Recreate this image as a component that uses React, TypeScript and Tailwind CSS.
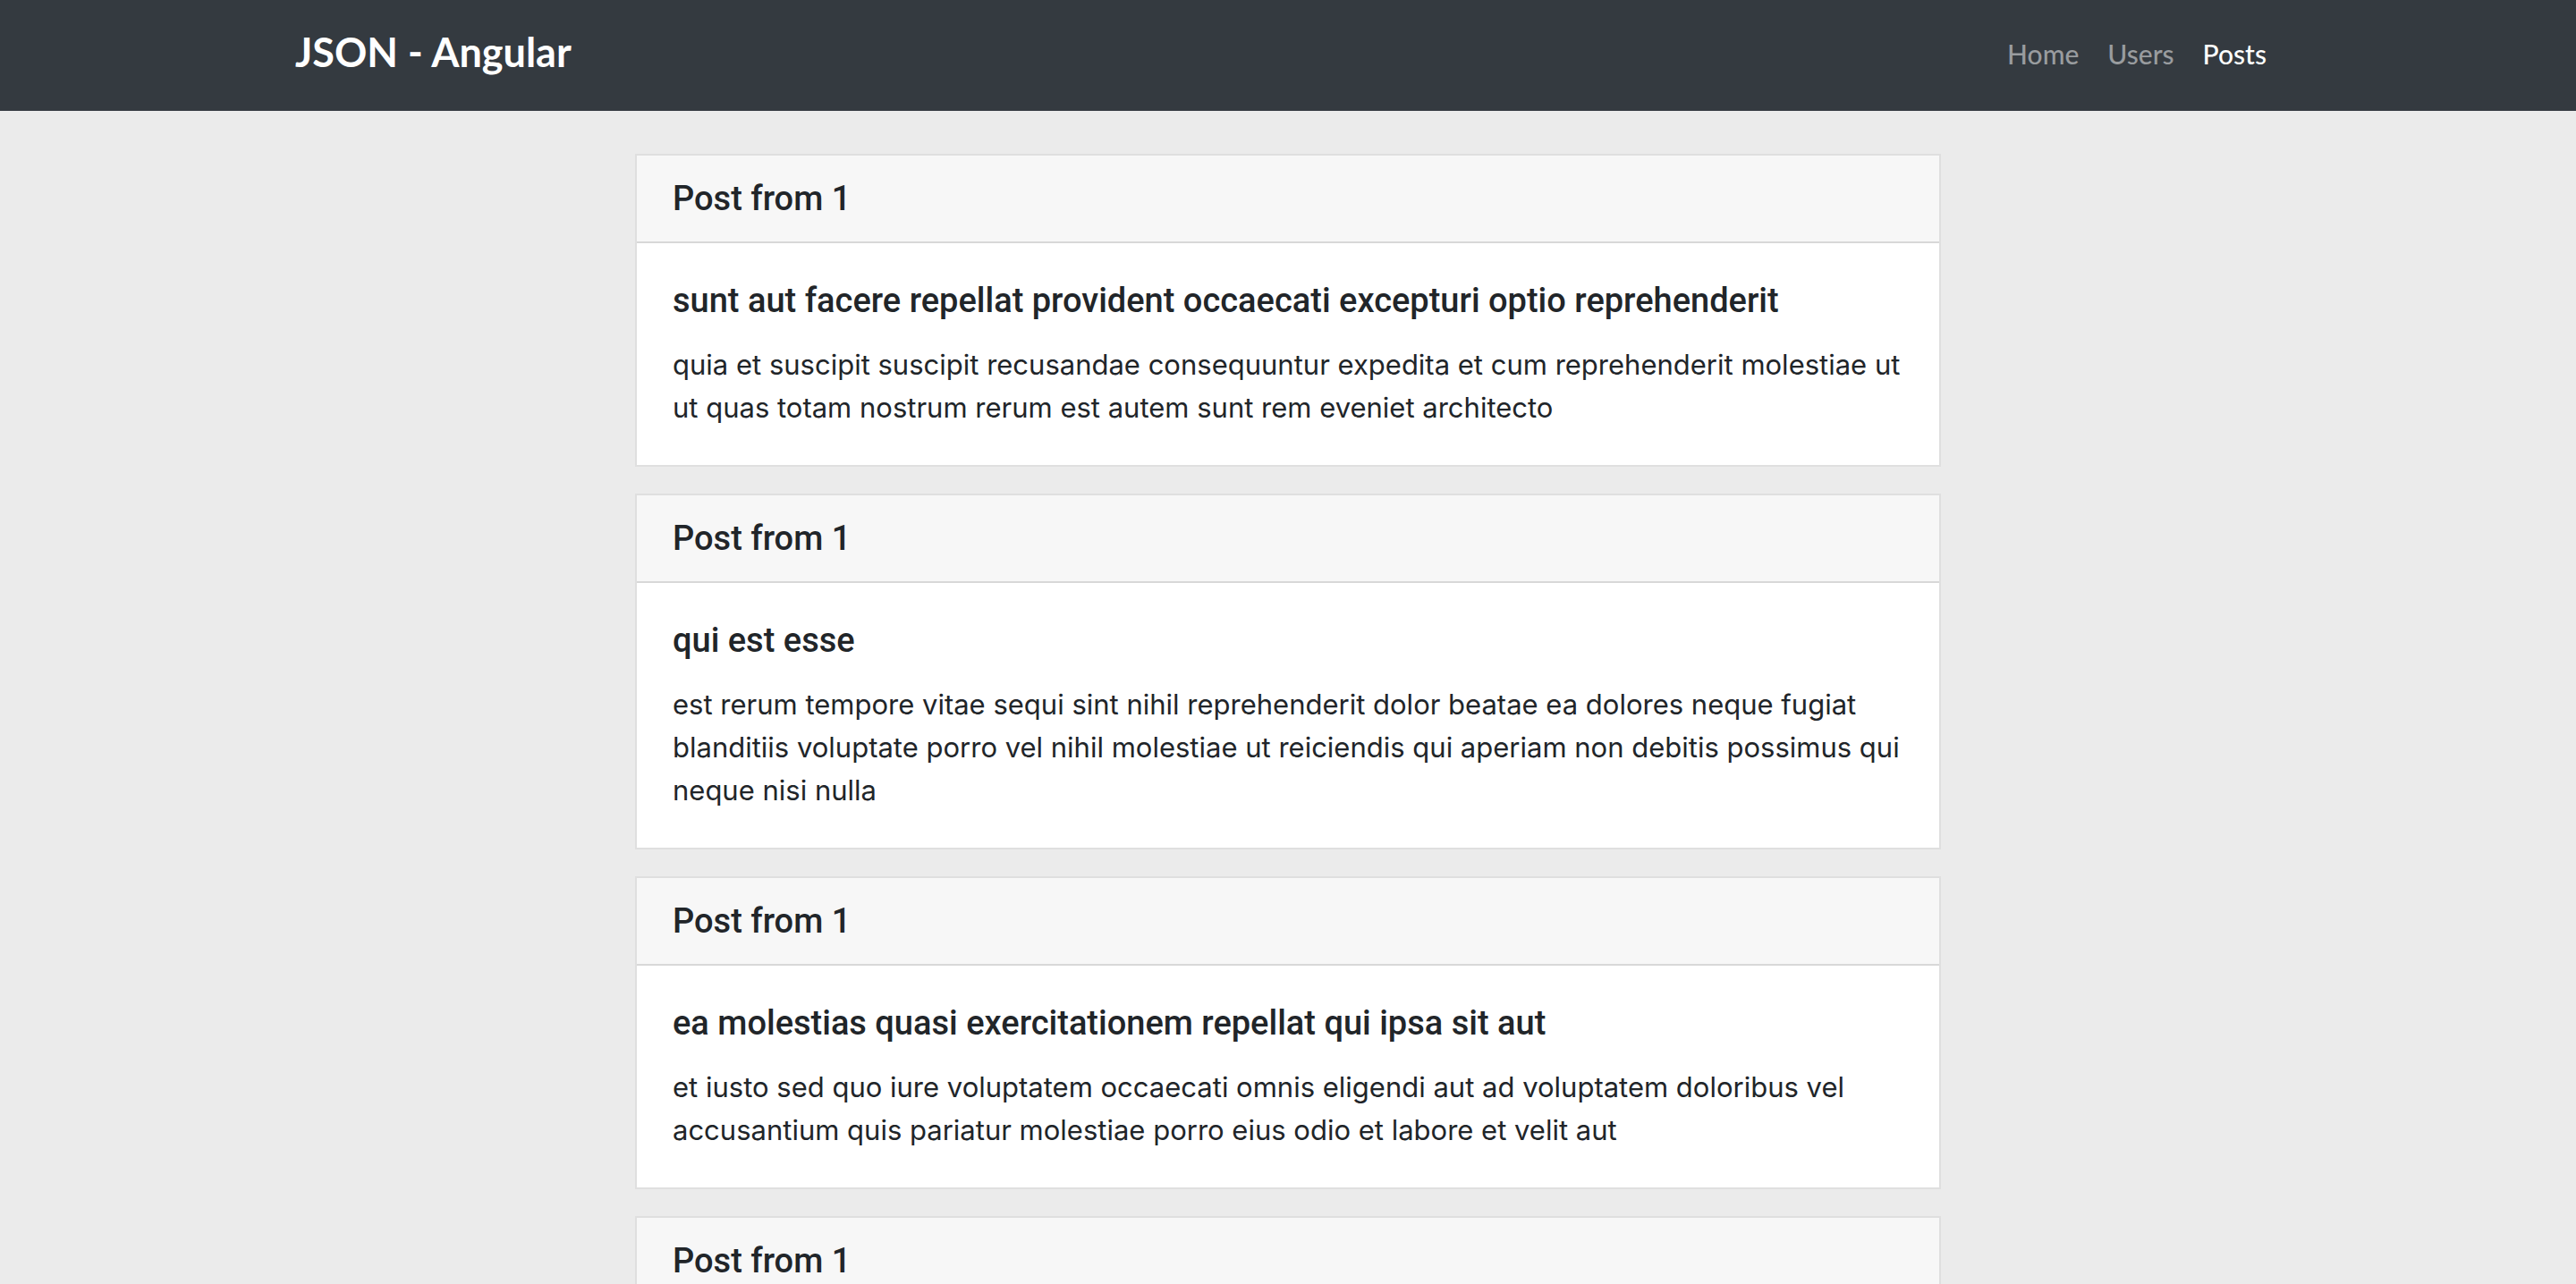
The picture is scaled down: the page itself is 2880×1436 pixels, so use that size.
type Post = { id: number; userId: number; title: string; body: string };

const posts: Post[] = [
  {
    id: 1,
    userId: 1,
    title: "sunt aut facere repellat provident occaecati excepturi optio reprehenderit",
    body: "quia et suscipit suscipit recusandae consequuntur expedita et cum reprehenderit molestiae ut ut quas totam nostrum rerum est autem sunt rem eveniet architecto",
  },
  {
    id: 2,
    userId: 1,
    title: "qui est esse",
    body: "est rerum tempore vitae sequi sint nihil reprehenderit dolor beatae ea dolores neque fugiat blanditiis voluptate porro vel nihil molestiae ut reiciendis qui aperiam non debitis possimus qui neque nisi nulla",
  },
  {
    id: 3,
    userId: 1,
    title: "ea molestias quasi exercitationem repellat qui ipsa sit aut",
    body: "et iusto sed quo iure voluptatem occaecati omnis eligendi aut ad voluptatem doloribus vel accusantium quis pariatur molestiae porro eius odio et labore et velit aut",
  },
];

const links = [
  { label: "Home", active: false },
  { label: "Users", active: false },
  { label: "Posts", active: true },
];

function CardHeader({ userId }: { userId: number }) {
  return (
    <h2 className="border-b-2 border-[#d8d8d8] bg-[#f7f7f7] px-10 py-6 font-['Roboto',sans-serif] text-[38px] leading-[48px] font-medium">
      Post from {userId}
    </h2>
  );
}

function PostCard({ post }: { post: Post }) {
  return (
    <article className="border-2 border-[#dfdfdf] bg-white">
      <CardHeader userId={post.userId} />
      <div className="p-10">
        <h3 className="mb-6 font-['Roboto',sans-serif] text-[38px] leading-[48px] font-medium">{post.title}</h3>
        <p className="text-[31px] leading-[48px]">{post.body}</p>
      </div>
    </article>
  );
}

export default function App() {
  return (
    <div className="h-screen overflow-hidden bg-[#ebebeb] font-['Inter',sans-serif] text-[#212529]">
      <header className="bg-[#343a40] font-['Lato',sans-serif]">
        <nav className="mx-auto flex max-w-[2220px] items-center justify-between pt-[26px] pr-4 pb-[30px]">
          <a href="#" className="pb-1 text-[45px] leading-[64px] font-bold text-white">JSON - Angular</a>
          <ul className="flex gap-8 text-[30px] leading-[48px] font-medium">
            {links.map((link) => (
              <li key={link.label}>
                <a href="#" className={link.active ? "text-white" : "text-[#999c9f]"}>{link.label}</a>
              </li>
            ))}
          </ul>
        </nav>
      </header>
      <main className="mx-auto flex max-w-[1460px] flex-col gap-[30px] pt-12">
        {posts.map((post) => <PostCard key={post.id} post={post} />)}
        <article className="border-2 border-[#dfdfdf] bg-white">
          <CardHeader userId={1} />
        </article>
      </main>
    </div>
  );
}
